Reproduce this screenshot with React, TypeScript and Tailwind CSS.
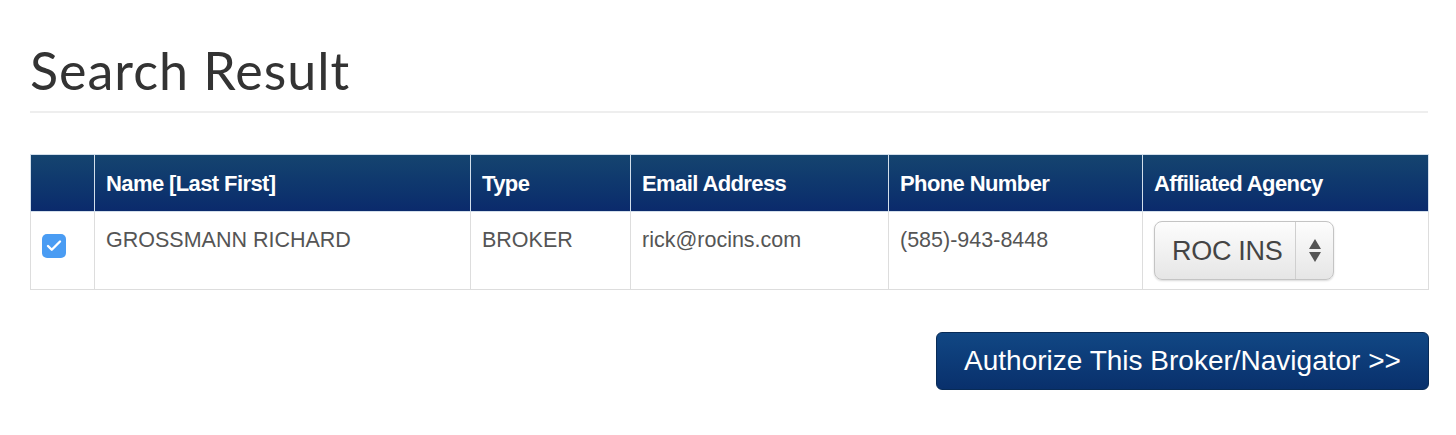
import { Check } from "lucide-react";

const columns = [
  { label: "", width: "w-[64px]" },
  { label: "Name [Last First]", width: "w-[376px]" },
  { label: "Type", width: "w-[160px]" },
  { label: "Email Address", width: "w-[258px]" },
  { label: "Phone Number", width: "w-[254px]" },
  { label: "Affiliated Agency", width: "w-[286px]" },
];

export default function App() {
  return (
    <div className="min-h-screen bg-white pl-[30px] font-['Liberation_Sans',Arial,sans-serif]">
      <div className="w-[1398px]">
        {/* Title */}
        <h1 className="pt-[44px] font-['Lato',sans-serif] text-[52px] font-normal leading-none tracking-[1px] text-[#333]">
          Search Result
        </h1>
        <div className="mt-[15px] h-[2px] bg-[#eeeeee]" />

        {/* Results table */}
        <table className="mt-[41px] w-full table-fixed border-collapse border border-[#dddddd]">
          <thead>
            <tr className="bg-gradient-to-b from-[#15446f] to-[#0b2a6c]">
              {columns.map((c, i) => (
                <th
                  key={i}
                  className={`${c.width} h-[57px] border border-[#d3dfeb] pl-[11px] pr-[12px] text-left align-middle text-[22px] font-bold tracking-[-0.6px] text-white`}
                >
                  {c.label}
                </th>
              ))}
            </tr>
          </thead>
          <tbody>
            <tr className="text-[21.5px] leading-[30px] text-[#555]">
              <td className="border border-[#dddddd] px-[11px] pt-[22px] align-top">
                <span className="flex h-[24px] w-[24px] items-center justify-center rounded-[5px] bg-[#4a9cf3]">
                  <Check className="h-[18px] w-[18px] text-white" strokeWidth={3.2} />
                </span>
              </td>
              <td className="border border-[#dddddd] px-[11px] pt-[13px] align-top">GROSSMANN RICHARD</td>
              <td className="border border-[#dddddd] px-[11px] pt-[13px] align-top">BROKER</td>
              <td className="border border-[#dddddd] px-[11px] pt-[13px] align-top">rick@rocins.com</td>
              <td className="border border-[#dddddd] px-[11px] pt-[13px] align-top">(585)-943-8448</td>
              <td className="border border-[#dddddd] px-[11px] pt-[9px] pb-[9px] align-top">
                <div className="flex h-[59px] w-[180px] items-stretch rounded-[8px] border border-[#c4c4c4] bg-gradient-to-b from-[#fdfdfd] to-[#e6e6e6] shadow-[0_1px_2px_rgba(0,0,0,0.15)]">
                  <span className="flex flex-1 items-center pl-[17px] text-[27px] tracking-[-0.3px] text-[#444]">ROC INS</span>
                  <span className="flex w-[38px] flex-col items-center justify-center gap-[3px] border-l border-[#cfcfcf]">
                    <svg width="12" height="10" viewBox="0 0 12 10">
                      <path d="M6 0 L12 10 L0 10 Z" fill="#555" />
                    </svg>
                    <svg width="12" height="10" viewBox="0 0 12 10">
                      <path d="M0 0 L12 0 L6 10 Z" fill="#555" />
                    </svg>
                  </span>
                </div>
              </td>
            </tr>
          </tbody>
        </table>

        {/* Action */}
        <div className="mt-[42px] flex justify-end">
          <button className="-mr-px h-[58px] w-[493px] rounded-[6px] border border-[#082b57] bg-gradient-to-b from-[#114784] to-[#09306c] text-[28px] text-white">
            Authorize This Broker/Navigator &gt;&gt;
          </button>
        </div>
      </div>
    </div>
  );
}
